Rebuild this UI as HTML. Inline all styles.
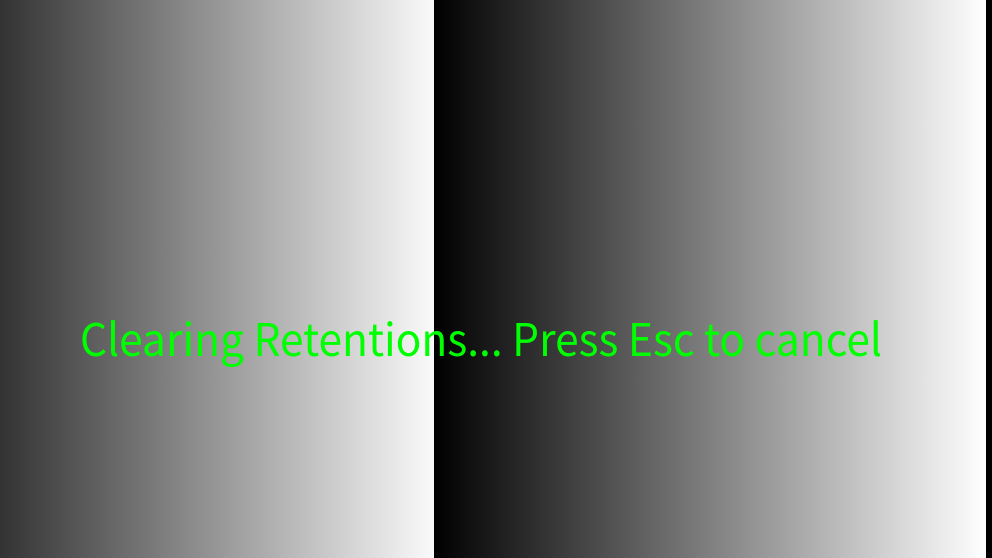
<!DOCTYPE html>
<html><head><style>
html,body{margin:0;padding:0;width:992px;height:558px;overflow:hidden;}
body{position:relative;background:#000;}
.bg{position:absolute;left:0;top:0;width:992px;height:558px;background:linear-gradient(to right,#333 0px,#fafafa 434px,#000 434px,#fff 986px,#000 986px,#000 992px);}
svg{position:absolute;left:0;top:0;}
</style></head><body>
<div class="bg"></div>
<svg width="992" height="558"><text x="80" y="356" font-family="'Noto Sans CJK JP','DejaVu Sans',sans-serif" font-size="45" fill="#00ff00" textLength="802" lengthAdjust="spacingAndGlyphs">Clearing Retentions... Press Esc to cancel</text></svg>
</body></html>
